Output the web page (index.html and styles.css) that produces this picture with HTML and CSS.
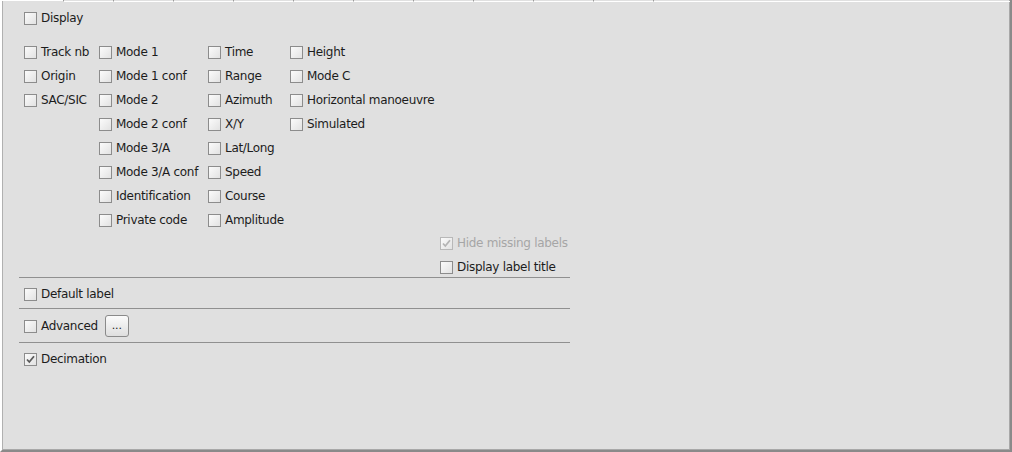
FILE: index.html
```html
<!DOCTYPE html>
<html>
<head>
<meta charset="utf-8">
<link rel="stylesheet" href="styles.css">
</head>
<body>
<div class="pane">
  <div class="tabs">
    <span class="tab sel"></span>
    <span class="tab first"></span>
    <span class="tab"></span><span class="tab"></span><span class="tab"></span><span class="tab"></span><span class="tab"></span>
    <span class="tab"></span><span class="tab"></span><span class="tab"></span><span class="tab"></span>
    <span class="tab last"></span>
  </div>
  <div class="content">
    <label class="cb display-row"><span class="box"></span><span class="txt">Display</span></label>

    <div class="columns">
      <div class="col c1">
        <label class="cb"><span class="box"></span><span class="txt">Track nb</span></label>
        <label class="cb"><span class="box"></span><span class="txt">Origin</span></label>
        <label class="cb"><span class="box"></span><span class="txt">SAC/SIC</span></label>
      </div>
      <div class="col c2">
        <label class="cb"><span class="box"></span><span class="txt">Mode 1</span></label>
        <label class="cb"><span class="box"></span><span class="txt">Mode 1 conf</span></label>
        <label class="cb"><span class="box"></span><span class="txt">Mode 2</span></label>
        <label class="cb"><span class="box"></span><span class="txt">Mode 2 conf</span></label>
        <label class="cb"><span class="box"></span><span class="txt">Mode 3/A</span></label>
        <label class="cb"><span class="box"></span><span class="txt">Mode 3/A conf</span></label>
        <label class="cb"><span class="box"></span><span class="txt">Identification</span></label>
        <label class="cb"><span class="box"></span><span class="txt">Private code</span></label>
      </div>
      <div class="col c3">
        <label class="cb"><span class="box"></span><span class="txt">Time</span></label>
        <label class="cb"><span class="box"></span><span class="txt">Range</span></label>
        <label class="cb"><span class="box"></span><span class="txt">Azimuth</span></label>
        <label class="cb"><span class="box"></span><span class="txt">X/Y</span></label>
        <label class="cb"><span class="box"></span><span class="txt">Lat/Long</span></label>
        <label class="cb"><span class="box"></span><span class="txt">Speed</span></label>
        <label class="cb"><span class="box"></span><span class="txt">Course</span></label>
        <label class="cb"><span class="box"></span><span class="txt">Amplitude</span></label>
      </div>
      <div class="col c4">
        <label class="cb"><span class="box"></span><span class="txt">Height</span></label>
        <label class="cb"><span class="box"></span><span class="txt">Mode C</span></label>
        <label class="cb"><span class="box"></span><span class="txt">Horizontal manoeuvre</span></label>
        <label class="cb"><span class="box"></span><span class="txt">Simulated</span></label>
      </div>
    </div>

    <div class="label-opts">
      <label class="cb disabled"><span class="box"><svg viewBox="0 0 13 13" width="13" height="13"><path d="M3 6.5 L5.3 9 L10 3.3" fill="none" stroke="#b4b4b4" stroke-width="1.8"/></svg></span><span class="txt">Hide missing labels</span></label>
      <label class="cb"><span class="box"></span><span class="txt">Display label title</span></label>
    </div>

    <div class="sep sep1"></div>
    <label class="cb default-row"><span class="box"></span><span class="txt">Default label</span></label>
    <div class="sep sep2"></div>
    <div class="adv-row">
      <label class="cb"><span class="box"></span><span class="txt">Advanced</span></label>
      <button class="dots">...</button>
    </div>
    <div class="sep sep3"></div>
    <label class="cb dec-row"><span class="box"><svg viewBox="0 0 13 13" width="13" height="13"><path d="M3 6.5 L5.3 9 L10 3.3" fill="none" stroke="#5a5a5a" stroke-width="1.8"/></svg></span><span class="txt">Decimation</span></label>
  </div>
</div>
</body>
</html>
```

FILE: styles.css
```css
html, body {
  margin: 0;
  padding: 0;
  background: #e0e0e0;
}

.pane {
  box-sizing: border-box;
  width: 1012px;
  height: 452px;
  background: #e0e0e0;
  border-left: 2px solid #ffffff;
  border-right: 2px solid #8a8a8a;
  border-bottom: 2px solid #8a8a8a;
  box-shadow: inset 1px 0 0 #b0b0b0, inset -1px -1px 0 #a8a8a8;
  font-family: "DejaVu Sans", "Liberation Sans", sans-serif;
  font-size: 12px;
  color: #1c1c1c;
}

.tabs {
  display: flex;
  height: 2px;
}

.tab {
  box-sizing: border-box;
  width: 60px;
  height: 2px;
  border-bottom: 1px solid #ffffff;
  border-left: 1px solid #9a9a9a;
  flex: none;
}

.tab.sel {
  width: 61px;
  border-left: none;
  border-bottom: none;
  border-top: 1px solid #ffffff;
}

.tab.first {
  width: 50px;
}

.tab.last {
  flex: 1;
}

.content {
  padding-left: 17px;
}

.cb {
  display: flex;
  align-items: center;
  height: 20px;
  padding-left: 5px;
  gap: 4px;
  white-space: nowrap;
  cursor: default;
}

.box {
  box-sizing: border-box;
  width: 13px;
  height: 13px;
  flex: none;
  border: 1px solid #8c8c8c;
  background: linear-gradient(135deg, #fbfbfb 0%, #ececec 60%, #e2e2e2 100%);
  position: relative;
}

.box svg {
  position: absolute;
  left: -1px;
  top: -1px;
}

.txt {
  line-height: 14px;
  letter-spacing: -0.3px;
}

.disabled .txt {
  color: #a6a6a6;
}

.disabled .box {
  border-color: #b8b8b8;
}

.display-row {
  margin-top: 6px;
}

.columns {
  display: flex;
  margin-top: 14px;
}

.col {
  display: flex;
  flex-direction: column;
  gap: 4px;
  flex: none;
}

.c1 { width: 75px; }
.c2 { width: 109px; }
.c3 { width: 82px; }
.c4 { width: 150px; }

.label-opts {
  display: flex;
  flex-direction: column;
  gap: 4px;
  margin-top: 3px;
  margin-left: 416px;
}

.sep {
  width: 551px;
  height: 1px;
  background: #909090;
}

.sep1 { margin-top: 0; }

.default-row {
  margin-top: 6px;
}

.sep2 { margin-top: 4px; }

.adv-row {
  display: flex;
  align-items: center;
  height: 22px;
  margin-top: 6px;
}

.dots {
  box-sizing: border-box;
  width: 24px;
  height: 22px;
  margin-left: 7px;
  padding: 0;
  border: 1px solid #8a8a8a;
  border-radius: 3px;
  background: linear-gradient(#fbfbfb, #dedede);
  font-family: "DejaVu Sans", sans-serif;
  font-size: 11px;
  color: #222;
  line-height: 20px;
  text-align: center;
}

.sep3 { margin-top: 5px; }

.dec-row {
  margin-top: 6px;
}
```
